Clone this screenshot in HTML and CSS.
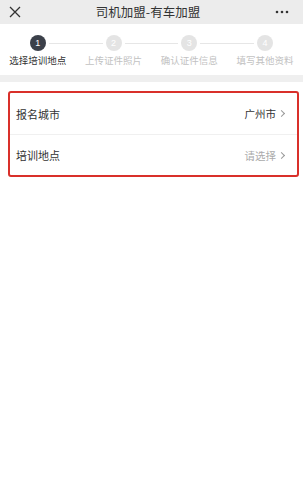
FILE: index.html
```html
<!DOCTYPE html>
<html lang="zh">
<head>
<meta charset="utf-8">
<link rel="stylesheet" href="styles.css">
</head>
<body>
<div class="page">
  <header class="nav">
    <span class="close">
      <svg width="12" height="12" viewBox="0 0 12 12"><path d="M1 1L11 11M11 1L1 11" stroke="#333" stroke-width="1.3" fill="none"/></svg>
    </span>
    <span class="title">司机加盟-有车加盟</span>
    <span class="more">
      <svg width="14" height="4" viewBox="0 0 14 4"><circle cx="2" cy="2" r="1.3" fill="#333"/><circle cx="7" cy="2" r="1.3" fill="#333"/><circle cx="12" cy="2" r="1.3" fill="#333"/></svg>
    </span>
  </header>
  <section class="steps">
    <div class="step active"><span class="dot">1</span><span class="label">选择培训地点</span></div>
    <div class="step"><span class="dot">2</span><span class="label">上传证件照片</span></div>
    <div class="step"><span class="dot">3</span><span class="label">确认证件信息</span></div>
    <div class="step"><span class="dot">4</span><span class="label">填写其他资料</span></div>
  </section>
  <div class="sep"></div>
  <section class="list">
    <div class="row"><span class="key">报名城市</span><span class="val">广州市<i class="chev"></i></span></div>
    <div class="row"><span class="key">培训地点</span><span class="val muted">请选择<i class="chev"></i></span></div>
  </section>
</div>
</body>
</html>
```
FILE: styles.css
```css
* { box-sizing: border-box; }
html, body { margin: 0; padding: 0; background: #fff; }
body { font-family: "Noto Sans CJK SC", "Noto Sans", sans-serif; color: #333; }
.page { width: 303px; min-height: 500px; background: #fff; }
.nav {
  height: 24px; background: #ececec;
  display: flex; align-items: center; justify-content: space-between;
  padding: 0 14px 0 9px;
}
.close { display: flex; width: 12px; }
.more { display: flex; width: 14px; }
.title { font-size: 12.5px; color: #333; line-height: 1; }
.steps {
  height: 51px; display: grid; grid-template-columns: repeat(4, 1fr);
  padding-top: 11px; position: relative;
}
.step { display: flex; flex-direction: column; align-items: center; position: relative; }
.step:not(:last-child)::after {
  content: ""; position: absolute; top: 8px; left: calc(50% + 11px); width: calc(100% - 22px);
  border-top: 1px solid #e6e6e6;
}
.dot {
  width: 16px; height: 16px; border-radius: 50%; background: #e4e4e4; color: #fff;
  font-size: 9px; line-height: 16px; text-align: center; font-family: "Liberation Sans", sans-serif;
}
.label { margin-top: 3px; font-size: 9.5px; color: #c2c2c2; line-height: 13px; white-space: nowrap; }
.step.active .dot { background: #3b404a; }
.step.active .label { color: #333; }
.sep { height: 7px; background: #efefef; }
.list {
  margin: 9px 4px 0 8px; border: 2px solid #d9302a; border-radius: 3px;
}
.row {
  height: 41px; display: flex; align-items: center; justify-content: space-between;
  padding: 0 13px 0 6px;
}
.row + .row { border-top: 1px solid #f0f0f0; }
.key { font-size: 11px; color: #333; }
.val { font-size: 10.5px; color: #333; display: flex; align-items: center; }
.val.muted { color: #aaa; }
.chev {
  display: inline-block; width: 5px; height: 5px; margin-left: 3px;
  border-top: 1px solid #999; border-right: 1px solid #999; transform: rotate(45deg);
}
```
